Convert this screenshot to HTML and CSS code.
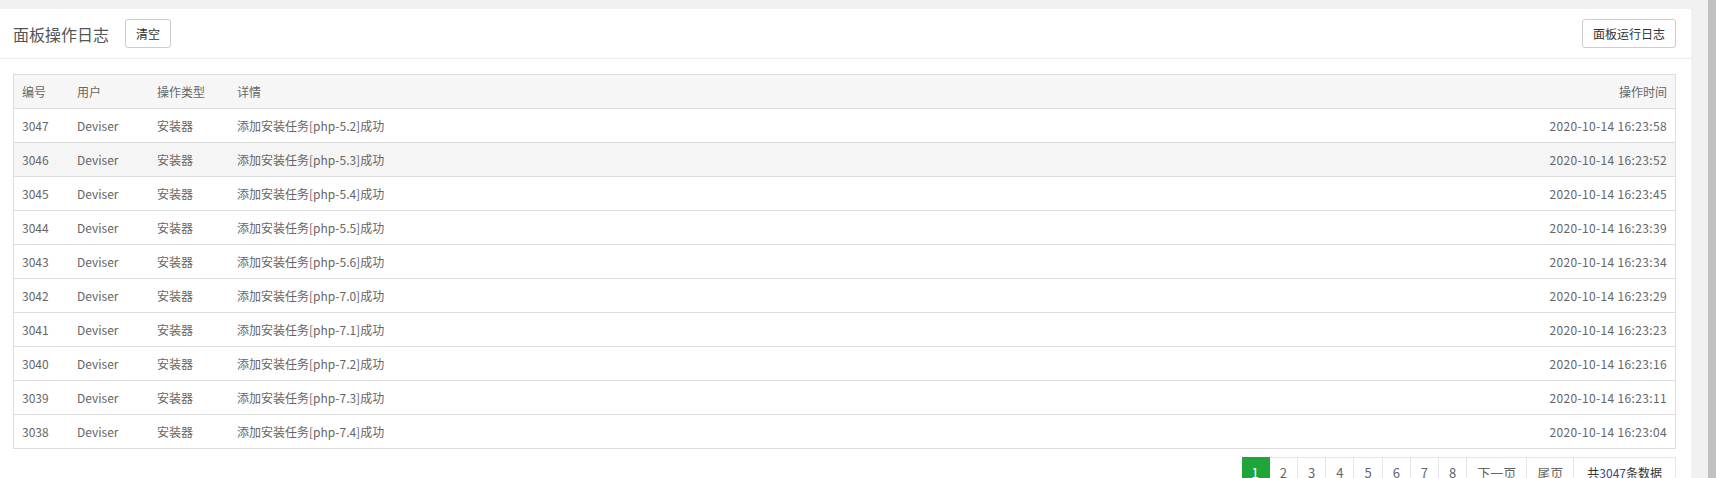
FILE: index.html
```html
<!DOCTYPE html>
<html lang="zh-CN">
<head>
    <meta charset="UTF-8">
    <meta name="viewport" content="width=device-width, initial-scale=1.0">
    <title>面板操作日志</title>
    <link rel="stylesheet" href="styles.css">
</head>
<body>

<div class="page">
    <div class="main">
        <div class="card">
            <div class="card-head">
                <div class="head-left">
                    <span class="card-title">面板操作日志</span>
                    <button class="btn">清空</button>
                </div>
                <button class="btn">面板运行日志</button>
            </div>

            <div class="card-body">
                <table class="log-table">
                    <thead>
                        <tr>
                            <th class="col-id">编号</th>
                            <th class="col-user">用户</th>
                            <th class="col-type">操作类型</th>
                            <th>详情</th>
                            <th class="col-time">操作时间</th>
                        </tr>
                    </thead>
                    <tbody>
                        <tr><td>3047</td><td>Deviser</td><td>安装器</td><td>添加安装任务[php-5.2]成功</td><td class="col-time">2020-10-14 16:23:58</td></tr>
                        <tr class="hover"><td>3046</td><td>Deviser</td><td>安装器</td><td>添加安装任务[php-5.3]成功</td><td class="col-time">2020-10-14 16:23:52</td></tr>
                        <tr><td>3045</td><td>Deviser</td><td>安装器</td><td>添加安装任务[php-5.4]成功</td><td class="col-time">2020-10-14 16:23:45</td></tr>
                        <tr><td>3044</td><td>Deviser</td><td>安装器</td><td>添加安装任务[php-5.5]成功</td><td class="col-time">2020-10-14 16:23:39</td></tr>
                        <tr><td>3043</td><td>Deviser</td><td>安装器</td><td>添加安装任务[php-5.6]成功</td><td class="col-time">2020-10-14 16:23:34</td></tr>
                        <tr><td>3042</td><td>Deviser</td><td>安装器</td><td>添加安装任务[php-7.0]成功</td><td class="col-time">2020-10-14 16:23:29</td></tr>
                        <tr><td>3041</td><td>Deviser</td><td>安装器</td><td>添加安装任务[php-7.1]成功</td><td class="col-time">2020-10-14 16:23:23</td></tr>
                        <tr><td>3040</td><td>Deviser</td><td>安装器</td><td>添加安装任务[php-7.2]成功</td><td class="col-time">2020-10-14 16:23:16</td></tr>
                        <tr><td>3039</td><td>Deviser</td><td>安装器</td><td>添加安装任务[php-7.3]成功</td><td class="col-time">2020-10-14 16:23:11</td></tr>
                        <tr><td>3038</td><td>Deviser</td><td>安装器</td><td>添加安装任务[php-7.4]成功</td><td class="col-time">2020-10-14 16:23:04</td></tr>
                    </tbody>
                </table>

                <div class="pager">
                    <span class="current">1</span>
                    <a href="#">2</a>
                    <a href="#">3</a>
                    <a href="#">4</a>
                    <a href="#">5</a>
                    <a href="#">6</a>
                    <a href="#">7</a>
                    <a href="#">8</a>
                    <a href="#" class="wide">下一页</a>
                    <a href="#" class="wide">尾页</a>
                    <span class="count">共<em>3047</em>条数据</span>
                </div>
            </div>
        </div>
    </div>
    <div class="scroll-thumb"></div>
</div>

</body>
</html>
```

FILE: styles.css
```css
body {
    font-family: "Microsoft YaHei", "Noto Sans CJK SC", sans-serif;
    font-size: 12px;
    color: #666;
    margin: 0;
    padding: 0;
    background-color: #f1f1f1;
    overflow: hidden;
}
.page {
    display: flex;
    height: 478px;
}
.main {
    width: 1691px;
    padding-top: 9px;
}
.scroll-thumb {
    width: 8px;
    margin-left: auto;
    background-color: #c1c1c1;
}
.card {
    background-color: #fff;
    height: 469px;
}
.card-head {
    display: flex;
    align-items: center;
    justify-content: space-between;
    height: 49px;
    padding: 0 15px 0 13px;
    border-bottom: 1px solid #ececec;
}
.head-left {
    display: flex;
    align-items: center;
    gap: 16px;
}
.card-title {
    font-size: 16px;
    color: #555;
}
.btn {
    font-family: inherit;
    font-size: 12px;
    color: #333;
    height: 29px;
    padding: 0 10px;
    background-color: #fff;
    border: 1px solid #ccc;
    border-radius: 3px;
}
.card-body {
    padding: 15px 15px 0 13px;
}
.log-table {
    width: 100%;
    border-collapse: separate;
    border-spacing: 0;
    border: 1px solid #ddd;
    border-bottom: none;
}
.log-table th, .log-table td {
    height: 33px;
    padding: 0 8px;
    line-height: 33px;
    text-align: left;
    font-weight: normal;
    white-space: nowrap;
    border-bottom: 1px solid #ddd;
}
.log-table th {
    background-color: #f6f6f6;
}
.log-table tr.hover td {
    background-color: #f5f5f5;
}
.col-id {
    width: 39px;
}
.col-user {
    width: 64px;
}
.col-type {
    width: 64px;
}
.log-table .col-time {
    text-align: right;
}
.log-table td.col-time {
    letter-spacing: 0.35px;
}
.pager {
    display: flex;
    justify-content: flex-end;
    margin-top: 8px;
}
.pager a, .pager span {
    min-width: 7px;
    height: 30px;
    line-height: 30px;
    padding: 0 10px;
    font-size: 13px;
    color: #666;
    text-align: center;
    text-decoration: none;
    border: 1px solid #e6e6e6;
    border-left: none;
}
.pager .wide {
    padding: 0 10px;
}
.pager .current {
    color: #fff;
    background-color: #20a53a;
    border-color: #20a53a;
}
.pager .count {
    font-size: 12px;
    padding: 0 13px;
    color: #333;
}
.pager .count em {
    font-style: normal;
    color: #3b4690;
}
```
